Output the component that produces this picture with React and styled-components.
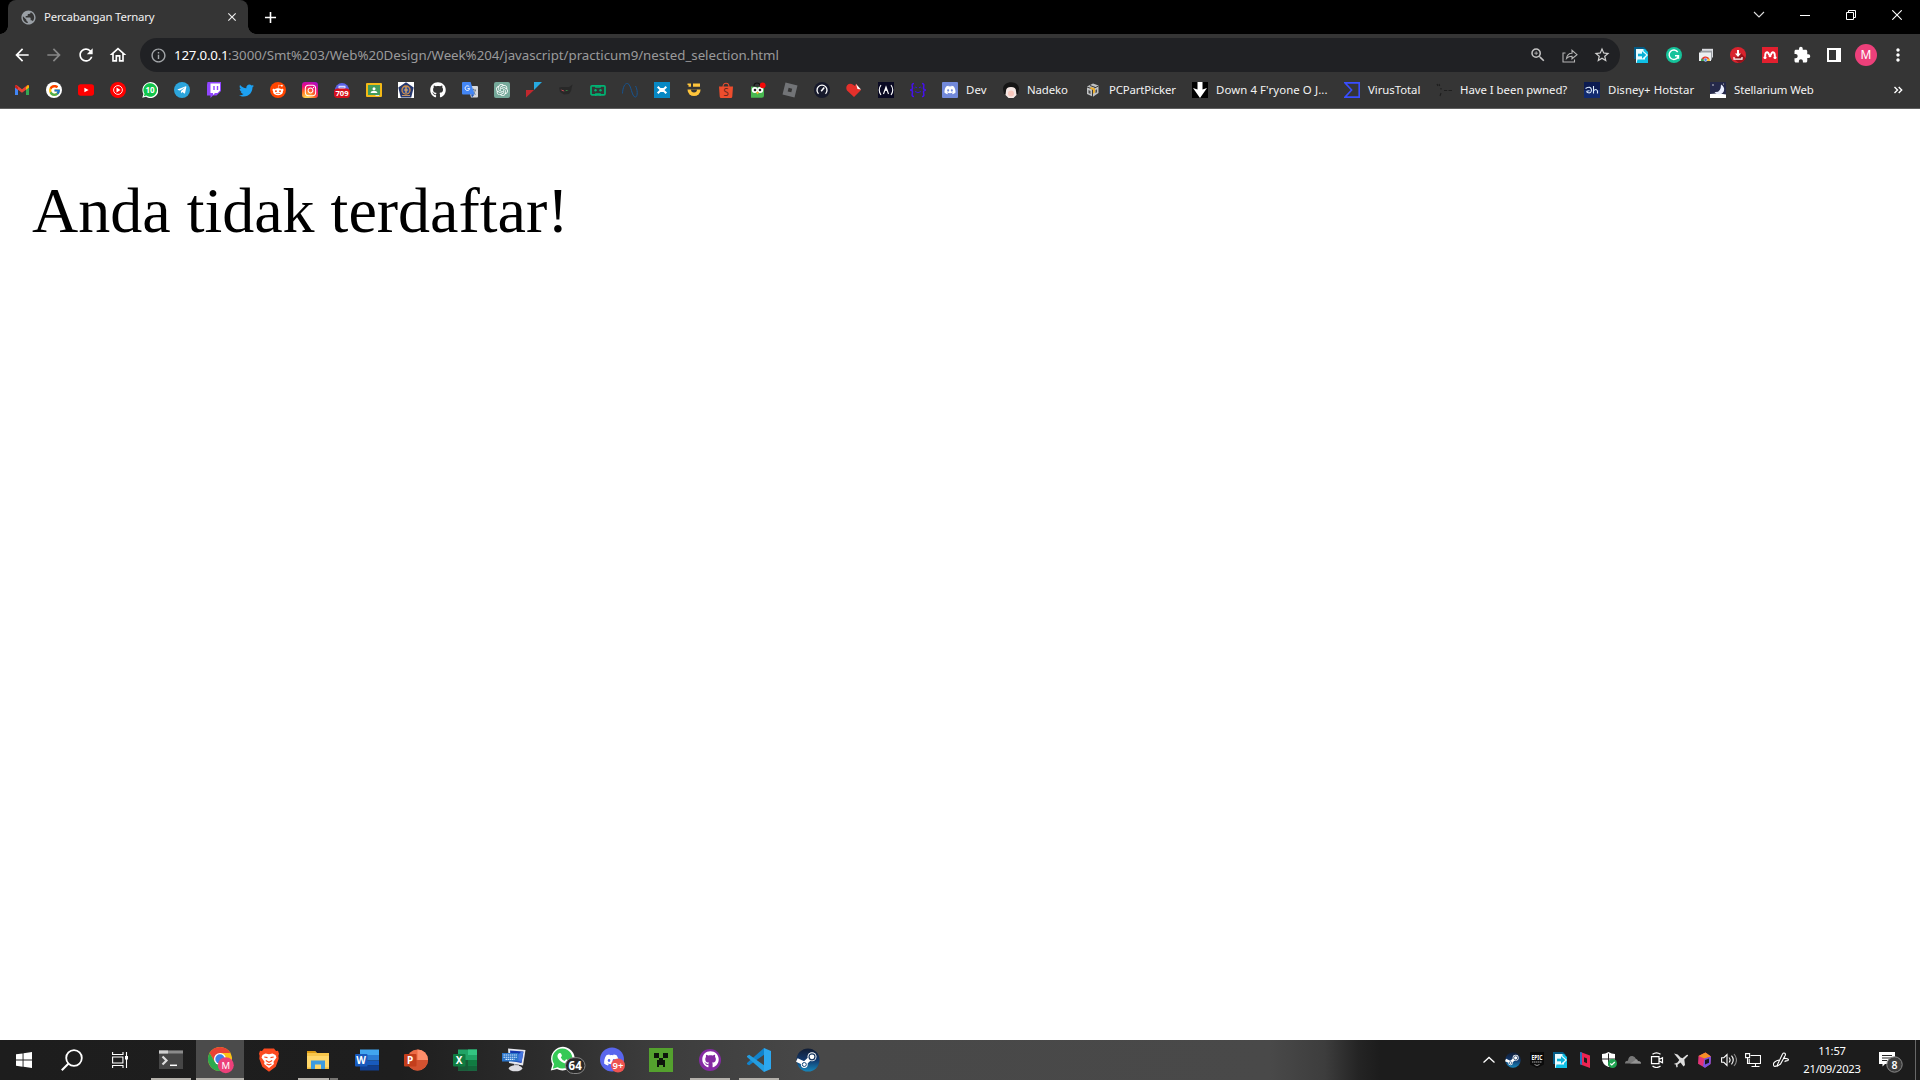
import React from "react";
import styled, { createGlobalStyle } from "styled-components";
import { FaTwitter, FaRedditAlien, FaTelegramPlane, FaGithub, FaDiscord, FaInstagram } from "react-icons/fa";
import { FcGoogle } from "react-icons/fc";
import { SiOpenai } from "react-icons/si";
import { MdPublic, MdClose, MdAdd, MdArrowBack, MdArrowForward, MdRefresh, MdOutlineHome, MdInfoOutline, MdExtension, MdZoomIn, MdStarBorder, MdMoreVert } from "react-icons/md";

const UI = `"Segoe UI", "Noto Sans", "Open Sans", sans-serif`;

const Global = createGlobalStyle`
  body { margin: 0; background: #fff; overflow: hidden; }
  svg { display: block; flex: none; }
  svg text { font-family: "Noto Sans", sans-serif; }
`;
const Screen = styled.div`
  width: 1920px; height: 1080px; display: flex; flex-direction: column;
  background: #fff; font-family: ${UI}; overflow: hidden;
`;
const TabStrip = styled.div`
  height: 34px; display: flex; background: #000; color: #fff; padding-left: 8px; flex: none;
`;
const Tab = styled.div`
  position: relative; width: 240px; height: 34px; box-sizing: border-box; padding: 0 9px 0 12px;
  display: flex; align-items: center; background: #353535; border-radius: 8px 8px 0 0;
  &::before, &::after {
    content: ""; position: absolute; bottom: 0; width: 8px; height: 8px;
  }
  &::before { left: -8px; background: radial-gradient(circle at 0 0, transparent 7.5px, #353535 8px); }
  &::after { right: -8px; background: radial-gradient(circle at 100% 0, transparent 7.5px, #353535 8px); }
`;
const TabTitle = styled.span`
  flex: 1; margin-left: 7px; font-size: 11.4px; line-height: 16px; letter-spacing: -0.2px; color: #f1f1f1; white-space: nowrap;
`;
const NewTab = styled.div`
  width: 44px; display: flex; align-items: center; justify-content: center;
`;
const WindowControls = styled.div`
  margin-left: auto; display: flex;
`;
const WindowButton = styled.div`
  width: 46px; height: 29px; display: flex; align-items: center; justify-content: center;
`;
const Toolbar = styled.div`
  height: 42px; flex: none; display: flex; align-items: center; background: #353535; color: #fff; padding-left: 6px;
`;
const Slot = styled.div`
  width: 32px; height: 32px; flex: none; display: flex; align-items: center; justify-content: center;
  color: ${(p) => p.$color || "#fff"};
`;
const Omnibox = styled.div`
  width: 1480px; height: 34px; margin-left: 6px; margin-right: 6px; flex: none; box-sizing: border-box; border-radius: 17px;
  background: #202124; display: flex; align-items: center; padding: 0 2px;
`;
const Url = styled.span`
  flex: 1; font-size: 13.3px; line-height: 20px; letter-spacing: -0.04px; color: #9a9a9b; white-space: nowrap;
`;
const Host = styled.span`
  display: inline-block; width: 54px; color: #fff; letter-spacing: -0.2px;
`;
const Avatar = styled.div`
  width: 22px; height: 22px; border-radius: 50%; background: #ec407a; color: #fff;
  font: 12px/22px ${UI}; text-align: center;
`;
const Bookmarks = styled.div`
  height: 33px; flex: none; display: flex; align-items: center; gap: 16px; padding: 0 14px 4px; box-sizing: border-box;
  background: #353535; border-bottom: 1px solid #5f5f5f;
`;
const Bookmark = styled.div`
  display: flex; align-items: center; gap: 8px; height: 16px; flex: none; color: #f3f3f3;
`;
const BookmarkLabel = styled.span`
  width: ${(p) => p.$w}px; font-size: 11.4px; line-height: 16px; letter-spacing: ${(p) => p.$track}px; white-space: nowrap;
`;
const Overflow = styled.span`
  margin-left: auto; width: 16px; text-align: center; color: #fff;
`;
const Disc = styled.div`
  width: ${(p) => p.$size || 16}px; height: ${(p) => p.$size || 16}px; border-radius: ${(p) => p.$round || "50%"};
  background: ${(p) => p.$bg}; color: ${(p) => p.$fg || "#fff"};
  display: flex; align-items: center; justify-content: center; flex: none; overflow: hidden;
`;
const Page = styled.main`
  flex: 1; background: #fff; padding: 0 32px; overflow: hidden;
`;
const Message = styled.p`
  margin: 65px 0 64px; font: 64px/normal "Liberation Serif", "Times New Roman", serif; color: #000; white-space: nowrap;
`;
const Taskbar = styled.div`
  height: 40px; flex: none; display: flex; color: #fff;
  background: linear-gradient(90deg, #1d1d1d 0, #1e1e1e 400px, #2c2c2c 540px, #3c3c3c 650px, #484848 820px, #494949 1270px, #3d3d3d 1325px, #242424 1358px, #1c1c1c 1380px, #1c1c1c 100%);
`;
const SystemButton = styled.div`
  width: 48px; height: 40px; display: flex; align-items: center; justify-content: center;
`;
const AppButton = styled.div`
  width: 48px; margin-left: ${(p) => p.$gap ?? 1}px; height: 40px; box-sizing: border-box; display: flex; flex-direction: column; align-items: center;
  background: ${(p) => (p.$active ? "#4b4b4b" : "transparent")};
`;
const AppIcon = styled.div`
  height: 38px; display: flex; align-items: center; justify-content: center; padding-top: 1px; box-sizing: border-box;
  padding-left: ${(p) => p.$shift || 0}px;
`;
const Underline = styled.div`
  width: ${(p) => (p.$active ? 48 : 40)}px; height: 2px;
  background: ${(p) => (p.$split ? "linear-gradient(90deg,#b4b1ab 31px,#2a2a2a 31px,#2a2a2a 32px,#777572 32px)" : "#b4b1ab")};
`;
const Tray = styled.div`
  margin-left: auto; display: flex; align-items: center;
`;
const TrayItem = styled.div`
  width: ${(p) => p.$w || 24}px; height: 40px; display: flex; align-items: center; justify-content: center;
`;
const Clock = styled.div`
  width: 70px; display: flex; flex-direction: column; align-items: center; font-size: 11.2px; line-height: 18px; white-space: nowrap;
  padding-bottom: 1px;
`;
const ClockLine = styled.span`
  letter-spacing: ${(p) => p.$track}px;
`;
const ShowDesktop = styled.div`
  width: 4px; height: 40px; border-left: 1px solid #686868;
`;

const S = ({ s = 16, v, children }) => (
  <svg width={s} height={s} viewBox={v || `0 0 ${s} ${s}`} fill="none">{children}</svg>
);

const Gmail = () => (
  <S><path d="M1 4v9h3V7z" fill="#4285f4" /><path d="M15 4v9h-3V7z" fill="#34a853" /><path d="M1 3.800 2.500 3 8 7.200 13.500 3l1.500.8v1.600L8 10.700 1 5.400z" fill="#ea4335" /><path d="M12 5.200 14 3c1 .2 1 1 1 2.400l-3 2.300z" fill="#fbbc04" /><path d="M4 5.200 2 3C1 3.200 1 4 1 5.400l3 2.300z" fill="#c5221f" /></S>
);
const Youtube = () => <S><rect y="2.300" width="16" height="11.400" rx="2.600" fill="#f00" /><path d="m6.400 5.700 4.200 2.300-4.200 2.300z" fill="#fff" /></S>;
const YtMusic = () => <S><circle cx="8" cy="8" r="8" fill="#f00" /><circle cx="8" cy="8" r="4.400" stroke="#fff" strokeWidth=".9" /><path d="m6.500 5.600 4 2.400-4 2.400z" fill="#fff" /></S>;
const Wa10 = () => <S><path d="M.3 15.700 1.400 12A8 8 0 1 1 4 14.800z" fill="#fff" /><path d="m1.800 14.200.8-2.400A6.800 6.800 0 1 1 4.400 13.600z" fill="#12c54b" /><text x="8" y="11.100" fontSize="8" fontWeight="700" fill="#fff" textAnchor="middle">10</text></S>;
const Mail709 = () => <S><path d="M.8 9A7.200 8 0 0 1 15.200 9z" fill="#5b63e8" /><path d="M4.500 4.500h7M4.500 5.500l1.500 1h4l1.500-1" stroke="#d9dcff" strokeWidth="1.400" /><rect y="6.500" width="16" height="9.500" rx="3.500" fill="#d50f1c" /><text x="8" y="14.200" fontSize="7.700" fontWeight="700" fill="#fff" textAnchor="middle">709</text></S>;
const Classroom = () => <S><rect y="1" width="16" height="14" rx="1" fill="#f4b916" /><rect x="2" y="3" width="12" height="10" fill="#439b5b" /><circle cx="8" cy="6.700" r="1.500" fill="#fff" /><path d="M4.600 11c.2-3 6.600-3 6.800 0z" fill="#fff" /><path d="M9.500 13h3.500v1h-3.500z" fill="#e4e4e4" /></S>;
const Emblem = () => <S><path d="M0 0h16v16H0z" fill="#fff" /><path d="m8 .2 7.700 5.300-2.500 10H2.800L.3 5.500z" fill="#26386f" /><circle cx="8" cy="8" r="4.700" fill="#cc8e4b" /><circle cx="8" cy="8.300" r="3.300" fill="#304b93" /><path d="M8 5v6M6 8h4" stroke="#eab467" strokeWidth="1.200" /><path d="M4 13.500h8" stroke="#c29264" strokeWidth="1" /></S>;
const Translate = () => <S><path d="M6 4h9a1 1 0 0 1 1 1v9.500a1 1 0 0 1-1 1H9z" fill="#d6d8dc" /><path d="M9 8h5M11.500 6.800V8m2 0c-.6 2.200-2 3.500-3.500 4.500m.5-3.500 3 3.500" stroke="#657381" strokeWidth=".9" /><path d="M1 0h7.600l4 12.500H1a1 1 0 0 1-1-1V1a1 1 0 0 1 1-1z" fill="#4386f5" /><path d="M7.300 4.800A2.300 2.300 0 1 0 7.700 6.600H5.500" stroke="#fff" strokeWidth="1" /><path d="m9 12.500 1 3 2.500-3z" fill="#2859b5" /></S>;
const Flag = () => <S><path d="M8 0h8L8 8z" fill="#27aae1" /><path d="M0 8h8l-8 7.500z" fill="#c1272d" /></S>;
const DarkCat = () => <S><path d="M1 5.500 4 5h7l3.500-2.500L13 9l-2 3-5 .5L2 10z" fill="#282828" /><path d="m2.500 7.500 3 .8 1 1.200-2-.4z" fill="#d84e5b" /><path d="m7 9.300 1.500-1.300h2z" fill="#42bb56" /></S>;
const GreenBox = () => <S><rect x="1" y="3.800" width="14" height="9" rx="1" stroke="#00b373" strokeWidth="1.700" /><path d="M5.800 3v2.200h4.400V3M5.800 14v-2.200h4.400V14" stroke="#00b373" strokeWidth="1.300" /><circle cx="5.500" cy="8.300" r="1.200" fill="#00b373" /><circle cx="10.500" cy="8.300" r="1.200" fill="#00b373" /></S>;
const Curve = () => <S><path d="M.5 11.500C.8 5 3 1 5.500 1.500c4 .8 4 13.800 8 13.500 2.600-.5 2-8 0-11" stroke="#17538f" strokeWidth="1" /></S>;
const BlueX = () => <S><path d="M0 0h16v16H0z" fill="#0788c4" /><path d="M3.700 4.700 6 7h4l2.300-2.300M3.700 11.300 6 9h4l2.300 2.300" stroke="#fff" strokeWidth="2.100" /></S>;
const Smile = () => <S><path d="M1.500 1.500H5v3.300H2.500V3h-1zM7 1.500h7v3.300H7z" fill="#ffc53b" /><path d="M1.500 7.500H14.600a6.500 6.500 0 0 1-13.100 0z" fill="#ffc53b" /><path d="M5 7.500h6a3 3 0 0 1-6 0" fill="#353535" /></S>;
const Shopee = () => <S><path d="M5 5c0-5 6-5 6 0" stroke="#ee4d2d" strokeWidth="1.100" /><path d="M1 4.500h14l-.7 10q0 1.500-1.500 1.500H3.200q-1.500 0-1.500-1.500z" fill="#ee4d2d" /><text x="8" y="14" fontSize="10" fill="#65271d" textAnchor="middle">S</text></S>;
const Toped = () => <S><path d="M4 4c0-4 6-4 6 0" stroke="#111" strokeWidth="1.200" /><path d="M1 4.500 7 5l7-.5v9q0 2.300-2.200 2.300H1z" fill="#48b850" /><circle cx="4.800" cy="8" r="3" fill="#fff" /><circle cx="10.200" cy="8" r="3" fill="#fff" /><circle cx="5" cy="8" r="1.300" fill="#222" /><circle cx="10" cy="8" r="1.300" fill="#222" /><path d="m6 10.500 1.500-1 1.500 1-1.500 2z" fill="#f9a92b" /><circle cx="12.700" cy="3.300" r="2.900" fill="#f40909" /></S>;
const Roblox = () => <S><path d="M3.500.5 15.500 3.600 12.500 15.500.5 12.400z" fill="#727477" /><path d="m6.600 5.800 3.600.9-.9 3.600-3.600-.9z" fill="#353535" /></S>;
const Speed = () => <S><circle cx="8" cy="8" r="8" fill="#171a2c" /><path d="M4.500 11.700a5 5 0 1 1 7 0" stroke="#fff" strokeWidth="1.300" /><path d="m7.200 9.300 3-3.800" stroke="#fff" strokeWidth="1.500" /></S>;
const Heart = () => <S><path d="M8 15 1 8.500C-1.500 4 3-.5 7.500 3L9 4l1-2.500 2 3L15 8z" fill="#e5302b" /><path d="m10 2 5 5.500-3.500-.5z" fill="#fff" /></S>;
const Camp = () => <S><path d="M0 0h16v16H0z" fill="#0a0a23" /><path d="M3 3Q-.5 8 3 13M13 3q3.500 5 0 10M5.500 12 8 5l2.500 7M8 5v4" stroke="#fff" strokeWidth="1.100" /></S>;
const Braces = () => <S><path d="M4 1.500c-3 0-1.500 3-1.500 4.500S1 8 0 8c1 0 2.500.5 2.500 2S1 14.500 4 14.500M12 1.500c3 0 1.500 3 1.500 4.500S15 8 16 8c-1 0-2.500.5-2.500 2s1.500 4.500-1.500 4.500" stroke="#4610ee" strokeWidth="1.500" /><path d="m4.500 6 1.300-1L7 6m2 0 1.200-1 1.300 1M5 9.500q3 2.500 6 0" stroke="#3713dd" strokeWidth="1" /></S>;
const Nadeko = () => <S><path d="M0 7C0-2 16-2 16 7l-1 5H1z" fill="#151515" /><path d="M3 9q0-4 5-4t5 4l.5 4-3 3h-5L2.500 13z" fill="#f5e7e4" /><circle cx="8" cy="11.500" r="3" fill="#f8c8bd" /></S>;
const Parts = () => <S><path d="m2 4.500 6-3 5.500 2V11L8 14.800 2 12z" fill="#bfc1c2" /><path d="m2 5 5.500 2v8M8 6.800 13.500 4M5 3.500l5.500 2" stroke="#3a3a3a" strokeWidth="1" /><path d="m6 5 4 1.500v3.800L8 12V8L5 6.500z" fill="#edaf2e" /><path d="m3.500 8 2 1v3l-2-1zM10.500 8l1.500-.8v3l-1.500 1z" fill="#4a4a4a" /></S>;
const DownArrow = () => <S><path d="M0 0h16v16H0z" fill="#000" /><path d="M5.500 0h5v7.500L15 6l-7 10L1 6l4.500 1.500z" fill="#fff" /></S>;
const Virus = () => <S><path d="M1 .9h14.200v14.200H1L7.600 8z" stroke="#394eff" strokeWidth="1.600" /></S>;
const Pwned = () => <S><path d="m1 2 1 2m1-2 .7 2M5 6v1.500M5 11l-1 3M8 8.500h3.200M12.500 8.500H16" stroke="#1e1e1e" strokeWidth="1.100" /></S>;
const Hotstar = () => <S><path d="M0 0h16v16H0z" fill="#0c1b51" /><path d="M0 8h16v8H0z" fill="#122b70" /><path d="M1.500 6.500Q7 3.500 7.500 8q-.5 4-4 2.500Q1.500 8.700 5.500 8.700M9.500 4v7.500m0-2.500q2.500-3 4 0v2.500" stroke="#dcecff" strokeWidth="1.100" /></S>;
const Stellarium = () => <S><path d="M0 0h16v13H0z" fill="#25294a" /><path d="M0 12q8-1 16 .5V16H0z" fill="#fff" /><path d="M11 2.500a5.200 5.200 0 1 1-6.500 7.500q6.500 1 6.500-7.500z" fill="#e9edff" /><circle cx="3" cy="3" r=".7" fill="#fff" /><circle cx="13.500" cy="2" r=".5" fill="#fff" /></S>;

const ShareIcon = () => <S><path d="M3.500 6H1v9h11.500v-2.500M4.500 11.500C5 8 7 6.200 10 6.200V3.300L15 7.700l-5 4.100V9.300c-2.500 0-4 .5-5.500 2.200z" stroke="#b4b4b4" strokeWidth="1.100" /></S>;
const SyncPage = () => <S><path d="M0 0h10l3 3H2v9H0z" fill="#045b85" /><path d="M2 2h8l4 4v10H2z" fill="#e9fbff" /><path d="M3.500 12.500h7.500V11l3-3v8H2.500z" fill="#0fc0e6" /><path d="M9.500 2H11l3 3v3l-4.500-4z" fill="#0fc0e6" /><path d="M4 8h5" stroke="#08b1d8" strokeWidth="2.600" /><path d="m8 4.300 4.300 3.700L8 11.700z" fill="#08b1d8" /></S>;
const Grammarly = () => <S><circle cx="8" cy="8" r="8" fill="#15c39a" /><path d="M11.700 5A4.700 4.700 0 1 0 12.300 9.300M9 8.800h3.500v3" stroke="#fff" strokeWidth="1.400" /></S>;
const RemoteChrome = () => <S><path d="M4 1.800h11v8.700H4z" fill="#dadce0" /><path d="M2.500 3.700H14v9H2.500z" fill="#9a9ea3" /><path d="M1 5.500h12V14H1z" fill="#eceff1" /><path d="M3.100 14a4.500 4.500 0 0 1 8.700-1.600L7.500 14z" fill="#e83b32" /><path d="M3.100 14a4 4 0 0 1 .8-2.800L7 14z" fill="#35a853" /><path d="M8 11.800h3.500l.4 2.200H8z" fill="#fbc02d" /><circle cx="7.600" cy="12.800" r="1.600" fill="#4285f4" stroke="#fff" strokeWidth=".5" /></S>;
const Downloader = () => <S><circle cx="8" cy="8" r="8" fill="#d9232e" /><path d="m11 6 4.500 5A8 8 0 0 1 9 16l-5-4z" fill="#981119" /><path d="M8 3v4" stroke="#fff" strokeWidth="2" /><path d="M5 6.500h6L8 10z" fill="#fff" /><path d="M4 10v2.200h8V10" stroke="#fff" strokeWidth="1.200" /></S>;
const Mendeley = () => <S><path d="M0 0h16v16H0z" fill="#e3202f" /><circle cx="3" cy="10.500" r="1.500" fill="#fff" /><circle cx="8" cy="8.800" r="1.500" fill="#fff" /><circle cx="13" cy="10.500" r="1.500" fill="#fff" /><path d="M3.200 9.500Q3 5 5.200 5.200 6.800 5.500 7 8M9 8q.2-2.500 1.800-2.800Q13 5 12.800 9.500" stroke="#fff" strokeWidth="1.900" /></S>;

const ChromeLogo = () => (
  <S s={28}><circle cx="13" cy="13" r="12" fill="#fbc116" /><path d="M2.600 7A12 12 0 0 1 23.400 7H13l-5.200 9z" fill="#e94235" /><path d="M2.600 7A12 12 0 0 0 13 25l5.200-9H7.800z" fill="#2da94f" /><circle cx="13" cy="13" r="6" fill="#fff" /><circle cx="13" cy="13" r="4.700" fill="#3f7fe8" /><circle cx="18.800" cy="19.200" r="8" fill="#ec407a" /><text x="18.800" y="22.600" fontSize="9.500" fill="#fff" textAnchor="middle">M</text></S>
);
const Terminal = () => <S s={24}><path d="M0 2.500h24V21H0z" fill="#464646" /><path d="M0 2.500h24v3H0z" fill="#8b8b8b" /><path d="M0 2.500h9v3H0z" fill="#d0d0d0" /><path d="m3.500 8.500 4 4-4 4" stroke="#ddd" strokeWidth="2.200" /><path d="M11 17.300h7" stroke="#fff" strokeWidth="1.500" /></S>;
const Brave = () => <S s={24}><path d="M7 .5h10L19 3l2-.2 1 3-.6 2 .3 3-3 8-6.700 5-6.700-5-3-8 .3-3-.6-2 1-3L5 3z" fill="#fb4a20" /><path d="m5.500 7 3-1.500 3.500.7 3.500-.7 3 1.500 1 2.500-3 4.300.4 2.200-4.900 4-4.900-4 .4-2.200-3-4.300z" fill="#fff" /><path d="m7.300 9 3.200.7M16.700 9l-3.200.7M8.800 12.500l3.200 1.800 3.200-1.800M9.500 16l2.500.8 2.500-.8" stroke="#fb4a20" strokeWidth="1.200" /></S>;
const Explorer = () => <S s={24}><path d="M1 3h8l2 2h12v16H1z" fill="#f7c64b" /><path d="M1 3h8l1.500 2H1z" fill="#dc9b13" /><path d="M1 8h22v12.500H1z" fill="#ffd76a" /><path d="M5 21v-8.500h14V21h-4v-4.500H9V21z" fill="#3d9be0" /><path d="M1 19.500h4V21H1zM19 19.500h4V21h-4z" fill="#f2bc3f" /></S>;
const Office = ({ kind }) => {
  const dark = { W: "#185abd", P: "#c43e1c", X: "#107c41" }[kind];
  return (
    <S s={24}>
      {kind === "W" && <><path d="M5 1.500h19V7H5z" fill="#41a5ee" /><path d="M5 7h19v5.500H5z" fill="#2b7cd3" /><path d="M5 12.500h19v5H5z" fill="#185abd" /><path d="M5 17.500h19v5H5z" fill="#103f91" /></>}
      {kind === "P" && <><circle cx="13.500" cy="12" r="10.500" fill="#ed6c47" /><path d="M13.500 1.500A10.500 10.500 0 0 1 24 12H13.500z" fill="#ff8f6b" /><path d="M3 12h21a10.500 10.500 0 0 1-21 0z" fill="#d35230" /></>}
      {kind === "X" && <><path d="M5 1.500h19v21H5z" fill="#21a366" /><path d="M5 12h10v10.500H5z" fill="#185c37" /><path d="M15 1.500h9V7h-9z" fill="#33c481" /><path d="M15 12h9v5.500h-9z" fill="#107c41" /><path d="M15 17.500h9v5h-9z" fill="#12673a" /></>}
      <rect y="6" width="12.500" height="12.500" rx="1" fill={dark} /><text x="6.200" y="16" fontSize="10" fontWeight="700" fill="#fff" textAnchor="middle">{kind}</text>
    </S>
  );
};
const Keyboard = () => <S s={24}><path d="M6 .5 23.500 2 21 17.500 7 15z" fill="#e6e7ee" /><path d="m8 2.500 13.500 1L19.500 15 9 13z" fill="#1437ad" /><path d="m10 12 9-8h2.300L19.500 14z" fill="#4476df" /><path d="m12 16 5 1v3h-5z" fill="#a9a9b5" /><ellipse cx="13.500" cy="20.300" rx="6.700" ry="3" fill="#dcdce2" /><path d="M0 5h16.500v8.500H0z" fill="#2c75c9" /><path d="M1.500 7h13.500M1.500 9.200h13.500M3.500 11.400h9" stroke="#d6eaff" strokeWidth="1.100" strokeDasharray="1.500 .6" /></S>;
const WaTask = () => <svg width="36" height="28" viewBox="0 0 36 28"><path d="m.8 24.500 1.700-6.200A11.800 11.800 0 1 1 7 22.900z" fill="#fff" /><path d="m2.700 22.700 1.400-4.600A10 10 0 1 1 7.600 21.300z" fill="#35c956" /><g fill="#fff" transform="translate(6.500 6) scale(.72)"><path d="M2 3C4 .500 6 1 6.500 2.500L7.500 5q.2 1-1.500 2.500 2 4 5.500 5L13 10.500q.8-.6 2 .1l2 1.200q1 .8-.5 3.200C11.500 19-2 9 2 3z" /></g><rect x="15.500" y="11.700" width="19.500" height="15.800" rx="7.900" fill="#292929" stroke="#888" /><text x="25.200" y="23.700" fontSize="11.500" fontWeight="700" fill="#fff" textAnchor="middle">64</text></svg>;
const DiscordTask = () => <svg width="28" height="26" viewBox="0 0 28 26"><circle cx="13" cy="12.500" r="12" fill="#5966ed" /><FaDiscord x="4.500" y="5" width="17" height="15" color="#fff" /><circle cx="19" cy="18.500" r="7" fill="#ee5350" /><text x="19" y="22" fontSize="9.500" fontWeight="600" fill="#fff" textAnchor="middle">9+</text></svg>;
const Creeper = () => <S s={24}><path d="M0 0h24v24H0z" fill="#54a12e" /><path d="M5 5h5v5H5zM14 5h5v5h-5zM10 10h4v2h2v7h-2v-2h-4v2H8v-7h2z" fill="#0d150b" /></S>;
const VsCode = () => <S s={24}><path d="m17 0 1 6L2.200 17.300 0 16.200V15z" fill="#1183cc" /><path d="m0 8 2.200-1.200L18 18l-1 6L0 9z" fill="#249de0" /><path d="m17 0 7 3v18l-7 3z" fill="#2ca7ef" /></S>;
const Steam = ({ s = 24 }) => <S s={s} v="0 0 24 24"><defs><linearGradient id="steam" x2="0" y2="1"><stop stopColor="#111d34" /><stop offset=".5" stopColor="#12386c" /><stop offset="1" stopColor="#1787bb" /></linearGradient></defs><circle cx="12" cy="12" r="11.500" fill="url(#steam)" /><path d="m.8 12 7 3.200M8 16l7-6.500" stroke="#fff" strokeWidth="4" /><circle cx="16" cy="8.800" r="4.500" fill="#fff" /><circle cx="16" cy="8.800" r="3" stroke="#15345d" strokeWidth="1.200" /><circle cx="8.300" cy="16.500" r="3.400" fill="#fff" /><circle cx="8.300" cy="16.500" r="2" stroke="#174a7c" strokeWidth="1" /></S>;

const Windows = () => <S><path d="M0 2.300 6.600 1.400v6.200H0zM7.500 1.300 16 0v7.600H7.500zM0 8.500h6.600v6.200L0 13.700zM7.500 8.500H16V16l-8.500-1.200z" fill="#fff" /></S>;
const Search = () => <S s={22}><circle cx="13" cy="9" r="7.800" stroke="#fff" strokeWidth="1.800" /><path d="m7.300 14.800-6.500 6.500" stroke="#fff" strokeWidth="2" /></S>;
const TaskView = () => <S><path d="M.6 0v2.500H11V0M.6 16v-2.500H11V16M.6 5h10.300v6H.6zM14.500 0v16" stroke="#fff" strokeWidth="1.100" /><path d="M13 4h3v3.500h-3z" fill="#fff" /></S>;

const Epic = () => <S><path d="M1 0h14v12.500L8 16l-7-3.500z" fill="#0b0b0b" /><text x="8" y="7.500" fontSize="7" fontWeight="700" fill="#fff" textAnchor="middle" textLength="11" lengthAdjust="spacingAndGlyphs">EPIC</text><path d="M3 10h10" stroke="#aaa" strokeWidth="1.200" strokeDasharray="1.500 .5" /><path d="m5.500 12.500 2.500 1 2.500-1" stroke="#999" /></S>;
const Parsec = () => <S><path d="m3.500 0 9.500 3.500V16l-9.500-3.500z" fill="#ed2452" /><path d="M3 0 5 .5V13l-2-.8z" fill="#2573bd" /><path d="m7 5.300 3 1.100v4.800l-3-1.100z" fill="#1c1c1c" /></S>;
const Shield = () => <S><path d="M7.500 0q3 2 6.500 2v5q0 5-6.500 8Q1 12 1 7V2q3.500 0 6.500-2z" fill="#fff" /><path d="M7.500 1.500v12M1 7h13" stroke="#272727" strokeWidth="1" /><circle cx="11.500" cy="11.500" r="4.500" fill="#20a452" /><path d="m9.300 11.500 1.500 1.500 3-3" stroke="#fff" strokeWidth="1.200" /></S>;
const Cloud = () => <S><path d="M0 11.500q0-3 3-2.700Q3.500 3.500 7.500 4q2.500.3 3.500 3 1.500 0 2 2 3 0 3 2.500z" fill="#777" /><path d="M5 11.500 9.500 8.800q.8-1.800 2.200-1 1 .8 1 1.500 3-.3 3.300 2.200z" fill="#949494" /></S>;
const Meet = () => <S><path d="M2.500 4.700H10v7H2.500zM10 7.500l3.500-1.800v5L10 8.900M3.500 2.300q4-3 8 0M3.500 14q4 3 8 0" stroke="#fff" strokeWidth="1.200" /></S>;
const Plane = () => <S><path d="m1 1.500 3.700 1L7.500 5.500l2 .8 4-3.300q2-.8 1.500.8L11.300 7.500l.7 5.500-1.500 1.500-3-4-3 2.300.2 2.200-1.200.5-.8-3-2-.5 3.800-1.500L6.300 8z" fill="#ddd" /></S>;
const Toolbox = () => <S><path d="m1.500 4 7-3.500 5.500 4L13.500 12l-5.500 3.700-7-4z" fill="#e13378" /><path d="m1.500 4 7-3.500 5.500 4-6.500 2z" fill="#f58f25" /><path d="m7.500 6.500 6.500-2-.5 7.500L8 15.700l-2-1.200z" fill="#7654df" /><path d="m8 8 4-1.500v4.300L8 12.500z" fill="#17171d" /></S>;
const Speaker = () => <S><path d="M.6 5.700h2.200L6 2.500v11l-3.200-3.200H.6z" stroke="#fff" strokeWidth="1.100" /><path d="M8 5.500q2.200 2.500 0 5M10.500 3.700q3.500 4.300 0 8.600" stroke="#fff" strokeWidth="1.100" /><path d="M13 2q5 6 0 12" stroke="#888" strokeWidth="1.100" /></S>;
const Network = () => <S><path d="M5.500 3.500h10v8H4.200V7M6.500 14.500h8M10.500 11.500v3M2.500 7v4.500h2" stroke="#fff" strokeWidth="1.100" /><path d="M.6 1.600h4v4h-4zM2.600 5.600V7" stroke="#fff" strokeWidth="1.100" /></S>;
const Pen = () => <S><path d="M4.500 12.500 9.500 2q1-1.500 2.300-.7 1 .8.500 2L7.500 12l-3 2zM10 6.500q5-.5 5.500 1.300-.3 1.200-2.500 1-1.500.2-.7 1.200M6 8Q0 9.500.5 13q.5 2.500 4 .5" stroke="#fff" strokeWidth="1.100" /></S>;
const Notifications = () => <svg width="24" height="26" viewBox="0 0 24 26"><path d="M0 5h16v12H6l-2.500 2.500V17H0z" fill="#fff" /><path d="M3 8.500h10M3 11h10M3 13.500h5" stroke="#252525" strokeWidth="1.100" /><circle cx="15.500" cy="17.500" r="7.700" fill="#3c3c3c" stroke="#8b8b8b" /><text x="15.500" y="21.500" fontSize="10.500" fontWeight="600" fill="#fff" textAnchor="middle">8</text></svg>;

const iconBookmarks = [
  <Gmail />, <Disc $bg="#fff"><FcGoogle size={13} /></Disc>, <Youtube />, <YtMusic />, <Wa10 />,
  <Disc $bg="#2ca5dc"><FaTelegramPlane size={10} /></Disc>,
  <S><path d="M1.500 0H15v9l-4.500 4.500H7L4.500 16v-2.500H1V2.800z" fill="#9146ff" /><path d="M4.500 1.500H14v7l-2.500 2.500H9L7 13v-2H4.500z" fill="#fff" /><path d="M8 4v4M11.500 4v4" stroke="#9146ff" strokeWidth="1.400" /></S>,
  <Disc $round="0" $bg="transparent" $fg="#1da1f2"><FaTwitter size={15} /></Disc>,
  <Disc $bg="#ff4500"><FaRedditAlien size={12} /></Disc>,
  <Disc $round="3px" $bg="radial-gradient(circle at 30% 105%,#ffd34d 10%,#ff6b23 40%,#ed087f 65%,#9215df 100%)"><FaInstagram size={13} /></Disc>,
  <Mail709 />, <Classroom />, <Emblem />, <FaGithub size={16} color="#fff" />, <Translate />,
  <Disc $round="2px" $bg="#75a99a"><SiOpenai size={12} /></Disc>,
  <Flag />, <DarkCat />, <GreenBox />, <Curve />, <BlueX />, <Smile />, <Shopee />, <Toped />, <Roblox />, <Speed />, <Heart />, <Camp />, <Braces />,
];
const labelled = [
  [<Disc $round="1px" $bg="#7289da"><FaDiscord size={12} /></Disc>, "Dev", 21, 0.1],
  [<Nadeko />, "Nadeko", 42, -0.1],
  [<Parts />, "PCPartPicker", 67, -0.16],
  [<DownArrow />, "Down 4 F'ryone O J...", 112, 0.1],
  [<Virus />, "VirusTotal", 52, -0.05],
  [<Pwned />, "Have I been pwned?", 108, -0.03],
  [<Hotstar />, "Disney+ Hotstar", 86, 0.06],
  [<Stellarium />, "Stellarium Web", 80, -0.1],
];
const apps = [
  { icon: <Terminal />, open: true, gap: 3 },
  { icon: <ChromeLogo />, active: true, shift: 2 },
  { icon: <Brave /> },
  { icon: <Explorer />, open: true, split: true },
  { icon: <Office kind="W" /> }, { icon: <Office kind="P" /> }, { icon: <Office kind="X" /> },
  { icon: <Keyboard /> }, { icon: <WaTask />, shift: 9 }, { icon: <DiscordTask />, shift: 2 }, { icon: <Creeper /> },
  { icon: <Disc $size={22} $bg="#852ba3"><FaGithub size={17} /></Disc>, open: true },
  { icon: <VsCode />, open: true }, { icon: <Steam /> },
];
const trayIcons = [
  <S><path d="m2.500 10.500 5.500-5 5.500 5" stroke="#fff" strokeWidth="1.300" /></S>,
  <Steam s={16} />, <Epic />, <SyncPage />, <Parsec />, <Shield />, <Cloud />, <Meet />, <Plane />, <Toolbox />, <Speaker />, <Network />,
];

export default function App() {
  return (
    <Screen>
      <Global />
      <TabStrip>
        <Tab>
          <MdPublic size={17} color="#9aa0a6" />
          <TabTitle>Percabangan Ternary</TabTitle>
          <MdClose size={14} color="#eee" />
        </Tab>
        <NewTab><MdAdd size={19} color="#fff" /></NewTab>
        <WindowControls>
          <WindowButton><S s={12}><path d="m1 3 5 5 5-5" stroke="#ddd" strokeWidth="1.100" /></S></WindowButton>
          <WindowButton><S s={10}><path d="M0 5.500h10" stroke="#fff" /></S></WindowButton>
          <WindowButton><S s={10}><path d="M.5 2.500h7v7h-7zM2.500 2.500v-2h7v7h-2" stroke="#fff" /></S></WindowButton>
          <WindowButton><S s={10}><path d="m.3.300 9.400 9.400M9.700.3.300 9.700" stroke="#fff" strokeWidth="1.100" /></S></WindowButton>
        </WindowControls>
      </TabStrip>
      <Toolbar>
        <Slot><MdArrowBack size={20} /></Slot>
        <Slot $color="#878787"><MdArrowForward size={20} /></Slot>
        <Slot><MdRefresh size={20} /></Slot>
        <Slot><MdOutlineHome size={20} /></Slot>
        <Omnibox>
          <Slot $color="#a3a6a9"><MdInfoOutline size={17} /></Slot>
          <Url><Host>127.0.0.1</Host>:3000/Smt%203/Web%20Design/Week%204/javascript/practicum9/nested_selection.html</Url>
          <Slot $color="#c4c4c4"><MdZoomIn size={18} /></Slot>
          <Slot><ShareIcon /></Slot>
          <Slot $color="#d0d0d0"><MdStarBorder size={18} /></Slot>
        </Omnibox>
        <Slot><SyncPage /></Slot>
        <Slot><Grammarly /></Slot>
        <Slot><RemoteChrome /></Slot>
        <Slot><Downloader /></Slot>
        <Slot><Mendeley /></Slot>
        <Slot><MdExtension size={18} /></Slot>
        <Slot><S s={14}><path d="M1 1h12v12H1z" stroke="#fff" strokeWidth="2" /><path d="M9 1h4v12H9z" fill="#fff" /></S></Slot>
        <Slot><Avatar>M</Avatar></Slot>
        <Slot><MdMoreVert size={20} /></Slot>
      </Toolbar>
      <Bookmarks>
        {iconBookmarks.map((icon, i) => <Bookmark key={i}>{icon}</Bookmark>)}
        {labelled.map(([icon, label, w, track]) => (
          <Bookmark key={label}>{icon}<BookmarkLabel $w={w} $track={track}>{label}</BookmarkLabel></Bookmark>
        ))}
        <Overflow><S><path d="m4.500 5 3 3-3 3M8.700 5l3 3-3 3" stroke="#fff" strokeWidth="1.400" /></S></Overflow>
      </Bookmarks>
      <Page><Message>Anda tidak terdaftar!</Message></Page>
      <Taskbar>
        <SystemButton><Windows /></SystemButton>
        <SystemButton><Search /></SystemButton>
        <SystemButton><TaskView /></SystemButton>
        {apps.map((a, i) => (
          <AppButton key={i} $active={a.active} $gap={a.gap}>
            <AppIcon $shift={a.shift}>{a.icon}</AppIcon>
            {(a.open || a.active) && <Underline $active={a.active} $split={a.split} />}
          </AppButton>
        ))}
        <Tray>
          {trayIcons.map((icon, i) => <TrayItem key={i}>{icon}</TrayItem>)}
          <TrayItem $w={32}><Pen /></TrayItem>
          <Clock><ClockLine $track={-0.2}>11:57</ClockLine><ClockLine $track={-0.2}>21/09/2023</ClockLine></Clock>
          <TrayItem $w={48}><Notifications /></TrayItem>
          <ShowDesktop />
        </Tray>
      </Taskbar>
    </Screen>
  );
}
